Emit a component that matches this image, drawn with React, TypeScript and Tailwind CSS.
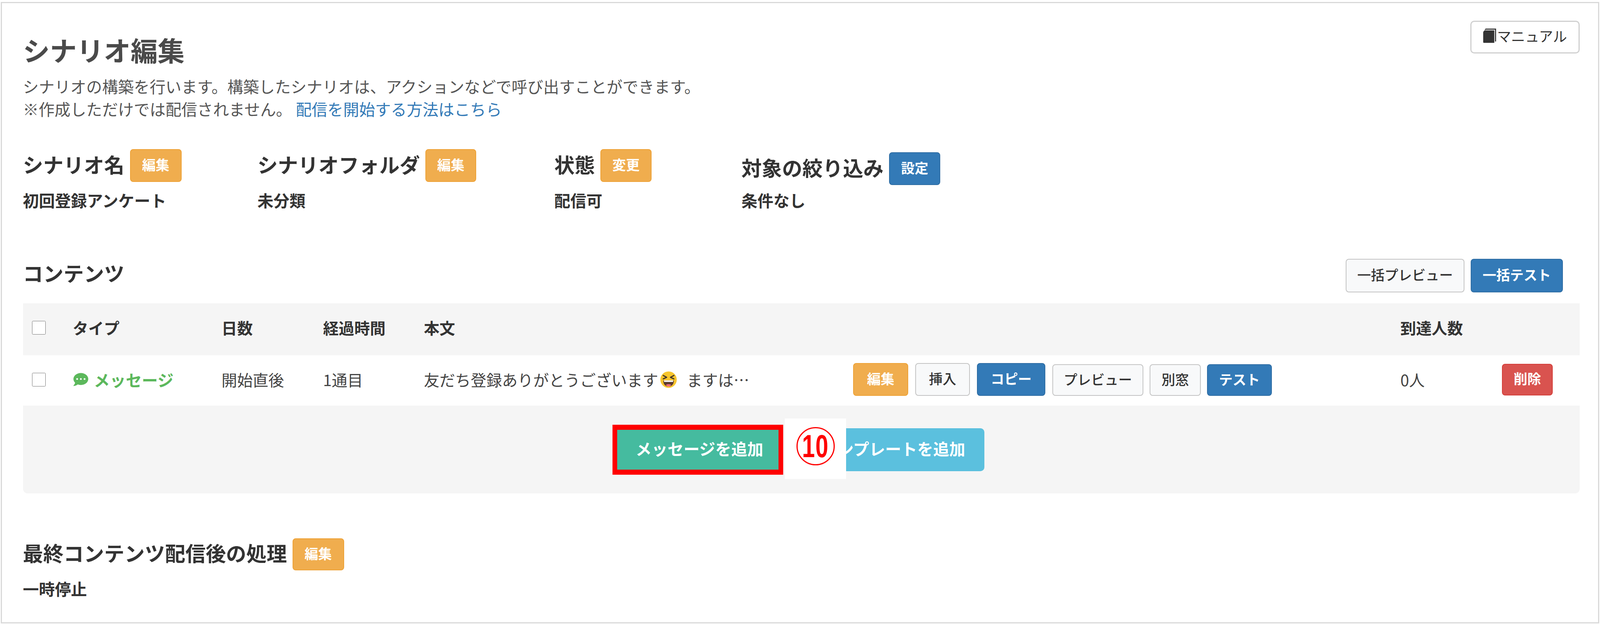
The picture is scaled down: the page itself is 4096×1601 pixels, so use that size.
import React from 'react'
import { FaCommentDots } from 'react-icons/fa'

const orange = 'bg-[#f0ad4e] border-[#eea236] text-white font-bold'
const blue = 'bg-[#337ab7] border-[#2e6da4] text-white font-bold'
const plain = 'bg-[#f8f9fa] border-[#c4c4c4] text-[#333333] font-medium'
const red = 'bg-[#d9534f] border-[#d43f3a] text-white font-bold'

function Btn({ className, children }: { className: string; children: React.ReactNode }) {
  return (
    <button className={`flex shrink-0 items-center justify-center rounded-[8px] border-2 pb-[7px] text-[35px] leading-none ${className}`}>
      {children}
    </button>
  )
}

function BookIcon() {
  return (
    <svg viewBox="0 0 36 40" className="h-[37px] w-[33px] shrink-0">
      <path d="M8 0H36V36H33V3H8C6 3 5 4 4 5C5 1 6 0 8 0Z" fill="#333333" />
      <path d="M6 5H31V40H2C1 40 0 39 0 38V11C0 8 3 5 6 5Z" fill="#333333" />
    </svg>
  )
}

function LaughEmoji() {
  return (
    <svg viewBox="0 0 44 44" className="mx-[5px] inline-block h-[43px] w-[43px] shrink-0">
      <circle cx="22" cy="22" r="21.5" fill="#f7c52e" />
      <path d="M8 11L17 16L8 20M36 11L27 16L36 20" fill="none" stroke="#40342a" strokeWidth="3" strokeLinecap="round" strokeLinejoin="round" />
      <path d="M8 24H36C36 34 30 40 22 40C14 40 8 34 8 24Z" fill="#5b3a2c" />
      <path d="M10 24H34V28H10Z" fill="#ffffff" />
      <path d="M15 36C18 33 26 33 29 36C27 39 24 40 22 40C20 40 17 39 15 36Z" fill="#ef6b7c" />
    </svg>
  )
}

function InfoColumn({ label, value, action, className }: { label: string; value: string; action: React.ReactNode; className: string }) {
  return (
    <div className={className}>
      <div className="flex h-[84px] items-center gap-[14px]">
        <span className="pb-[6px] text-[52px] leading-none font-bold text-[#333333]">{label}</span>
        {action}
      </div>
      <p className="mt-[17px] text-[41px] leading-[58px] font-bold text-[#333333]">{value}</p>
    </div>
  )
}

export default function App() {
  const rowGrid = 'grid grid-cols-[127.5px_381px_260px_258px_1099px_1401px_260px_1fr] items-center'

  return (
    <div className="h-[1601px] w-[4096px] overflow-hidden bg-white pt-[5px] pl-[2px] font-['Noto_Sans_CJK_JP',sans-serif] text-[#333333]">
      <div className="h-[1592px] w-[4092px] border-[3px] border-[#d9d9d9] pt-[45px] pr-[47px] pl-[53.5px]">
        {/* Page header */}
        <div className="flex items-start justify-between">
          <div className="pt-[40px]">
            <h1 className="text-[69px] leading-none font-bold text-[#4a4a4a]">シナリオ編集</h1>
            <p className="mt-[30px] text-[40.6px] leading-[58px] text-[#555555]">
              シナリオの構築を行います。構築したシナリオは、アクションなどで呼び出すことができます。
              <br />
              ※作成しただけでは配信されません。
              <a className="ml-[10px] text-[#337ab7]">配信を開始する方法はこちら</a>
            </p>
          </div>
          <button className="flex h-[84px] w-[280px] items-center justify-center gap-[3px] rounded-[10px] border-[3px] border-[#d0d0d0] bg-white pb-[8px] text-[36px] leading-none text-[#333333]">
            <BookIcon />
            マニュアル
          </button>
        </div>

        {/* Scenario info */}
        <div className="mt-[74px] flex">
          <InfoColumn className="w-[600.5px]" label="シナリオ名" value="初回登録アンケート" action={<Btn className={`h-[84px] w-[132px] ${orange}`}>編集</Btn>} />
          <InfoColumn className="w-[760px]" label="シナリオフォルダ" value="未分類" action={<Btn className={`h-[84px] w-[130px] ${orange}`}>編集</Btn>} />
          <InfoColumn className="w-[479px]" label="状態" value="配信可" action={<Btn className={`h-[84px] w-[131px] ${orange}`}>変更</Btn>} />
          <div>
            <div className="mt-[8px] flex h-[84px] items-center gap-[14px]">
              <span className="pb-[6px] text-[52px] leading-none font-bold text-[#333333]">対象の絞り込み</span>
              <Btn className={`h-[84px] w-[131px] ${blue}`}>設定</Btn>
            </div>
            <p className="mt-[9px] text-[41px] leading-[58px] font-bold text-[#333333]">条件なし</p>
          </div>
        </div>

        {/* Contents */}
        <div className="mt-[122px] flex h-[86px] items-center justify-between pr-[43px]">
          <h2 className="mb-[14px] text-[52px] leading-none font-bold text-[#333333]">コンテンツ</h2>
          <div className="flex gap-[16px]">
            <Btn className={`h-[86px] w-[304px] ${plain}`}>一括プレビュー</Btn>
            <Btn className={`h-[86px] w-[236px] ${blue}`}>一括テスト</Btn>
          </div>
        </div>

        <div className="mt-[28px] w-[3985.5px] text-[40px] leading-none">
          <div className={`${rowGrid} h-[133px] bg-[#f5f5f5] pb-[9px] font-bold`}>
            <input type="checkbox" className="ml-[23.5px] h-[35px] w-[35px]" />
            <span>タイプ</span>
            <span>日数</span>
            <span>経過時間</span>
            <span className="col-span-2">本文</span>
            <span>到達人数</span>
            <span />
          </div>

          <div className={`${rowGrid} h-[129px] bg-white pb-[5px] text-[#444444]`}>
            <input type="checkbox" className="ml-[23.5px] h-[35px] w-[35px]" />
            <span className="flex items-center gap-[12px] text-[41px] font-bold text-[#5cb85c]">
              <FaCommentDots className="h-[38px] w-[42px] shrink-0" />
              メッセージ
            </span>
            <span>開始直後</span>
            <span>1通目</span>
            <span className="flex items-center whitespace-nowrap">
              友だち登録ありがとうございます
              <LaughEmoji />
              <span className="ml-[20px]">ますは…</span>
            </span>
            <div className="flex items-start gap-[18px]">
              <Btn className={`h-[84px] w-[141px] ${orange}`}>編集</Btn>
              <Btn className={`h-[84px] w-[140px] ${plain}`}>挿入</Btn>
              <Btn className={`h-[84px] w-[175px] ${blue}`}>コピー</Btn>
              <div className="mt-[3px] flex gap-[16px]">
                <Btn className={`h-[81px] w-[233px] ${plain}`}>プレビュー</Btn>
                <Btn className={`h-[81px] w-[131px] ${plain}`}>別窓</Btn>
                <Btn className={`h-[81px] w-[166px] ${blue}`}>テスト</Btn>
              </div>
            </div>
            <span>0人</span>
            <Btn className={`h-[81px] w-[130px] ${red}`}>削除</Btn>
          </div>

          {/* Add buttons, with the numbered callout laid over them */}
          <div className="relative flex h-[225px] items-center rounded-b-[12px] bg-[#f5f5f5] pl-[1509.5px]">
            <button className="flex h-[128px] w-[437px] shrink-0 items-center justify-center border-x-[12px] border-y-[13px] border-[#ff0000] bg-[#45bb9f] pb-[6px] pl-[8px] text-[41px] leading-none font-bold text-white">
              メッセージを追加
            </button>
            <button className="ml-[13px] flex h-[110px] w-[502px] shrink-0 items-center justify-end rounded-[10px] bg-[#5bc0de] pr-[49px] pb-[6px] text-[41px] leading-none font-bold text-white">
              テンプレートを追加
            </button>
            <div className="absolute top-[33px] left-[1950.5px] flex h-[155px] w-[157px] items-center justify-center bg-white">
              <div className="mb-[13px] flex h-[98px] w-[98px] items-center justify-center rounded-full border-[3px] border-[#ff0000]">
                <span className="scale-x-[0.72] font-['Liberation_Sans',sans-serif] text-[82px] leading-none font-bold tracking-[2px] text-[#ff0000]">10</span>
              </div>
            </div>
          </div>
        </div>

        {/* After the last content */}
        <div className="mt-[115px] flex h-[82px] items-center gap-[14px]">
          <span className="pb-[9px] text-[52px] leading-none font-bold text-[#333333]">最終コンテンツ配信後の処理</span>
          <Btn className={`h-[82px] w-[132px] ${orange}`}>編集</Btn>
        </div>
        <p className="mt-[17px] text-[41px] leading-[58px] font-bold text-[#333333]">一時停止</p>
      </div>
    </div>
  )
}
